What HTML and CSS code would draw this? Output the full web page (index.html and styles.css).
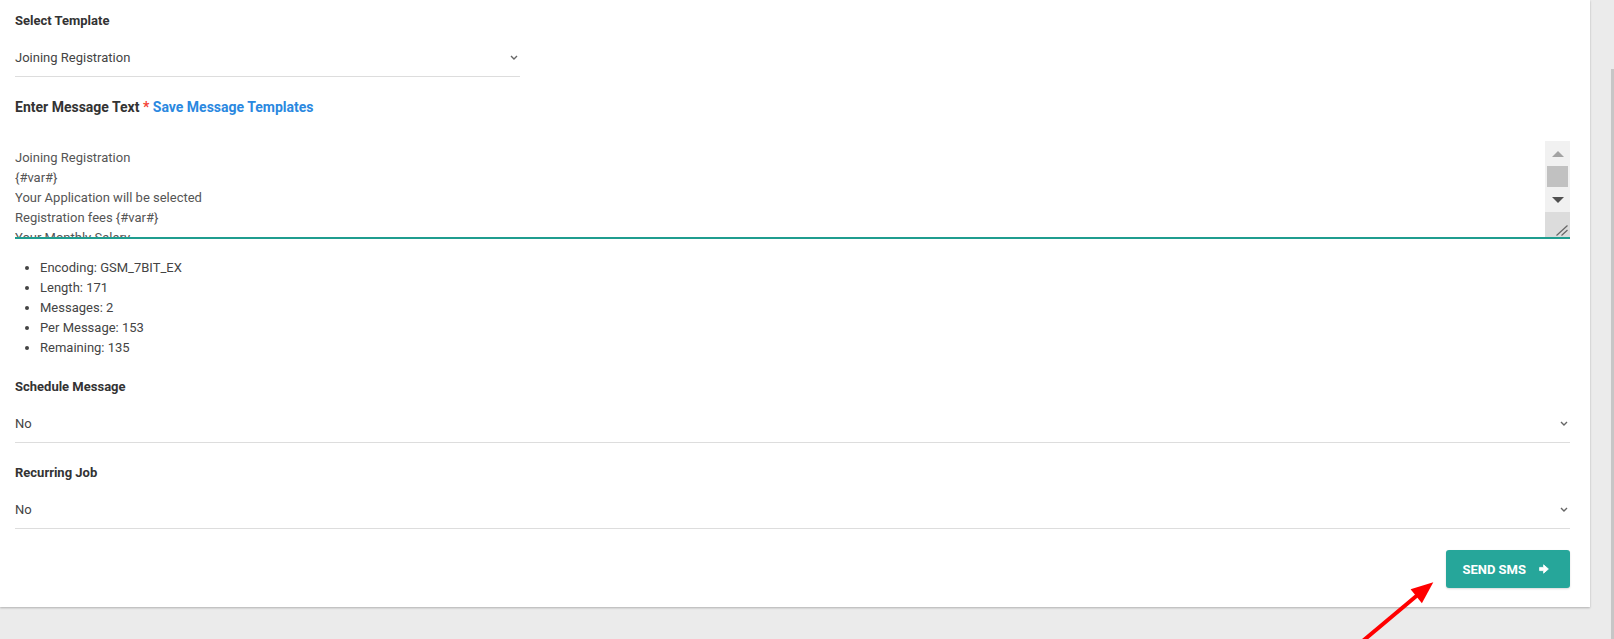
FILE: index.html
```html
<!DOCTYPE html>
<html lang="en">
<head>
  <meta charset="UTF-8" />
  <meta name="viewport" content="width=device-width, initial-scale=1.0"/>
  <title>Send SMS</title>
  <link rel="stylesheet" href="styles.css">
</head>
<body>
  <div class="page">
    <div class="card">
      <div class="field first">
        <div class="label">Select Template</div>
        <div class="select narrow">
          <span>Joining Registration</span>
          <svg class="chev" width="8" height="5" viewBox="0 0 8 5"><path d="M1 1l3 3 3-3" fill="none" stroke="#666" stroke-width="1.4"/></svg>
        </div>
      </div>

      <div class="field">
        <div class="label big">Enter Message Text <span class="req">*</span> <a class="link" href="#">Save Message Templates</a></div>
        <div class="msg-box">
          <textarea class="msg" autofocus spellcheck="false">Joining Registration
{#var#}
Your Application will be selected
Registration fees {#var#}
Your Monthly Salary
{#var#}
Thanks &amp; Regards
{#var#}</textarea>
          <div class="scrollbar">
            <div class="sb-btn"><span class="tri-up"></span></div>
            <div class="sb-track"><div class="sb-thumb"></div></div>
            <div class="sb-btn"><span class="tri-down"></span></div>
            <div class="sb-resizer">
              <svg width="25" height="25" viewBox="0 0 25 25"><path d="M11.5 23.5l11-10M16.5 23.5l6-5.5" stroke="#666" stroke-width="1.2" fill="none"/></svg>
            </div>
          </div>
        </div>
        <ul class="stats">
          <li>Encoding: GSM_7BIT_EX</li>
          <li>Length: 171</li>
          <li>Messages: 2</li>
          <li>Per Message: 153</li>
          <li>Remaining: 135</li>
        </ul>
      </div>

      <div class="field after-list">
        <div class="label">Schedule Message</div>
        <div class="select">
          <span>No</span>
          <svg class="chev" width="8" height="5" viewBox="0 0 8 5"><path d="M1 1l3 3 3-3" fill="none" stroke="#666" stroke-width="1.4"/></svg>
        </div>
      </div>

      <div class="field">
        <div class="label">Recurring Job</div>
        <div class="select">
          <span>No</span>
          <svg class="chev" width="8" height="5" viewBox="0 0 8 5"><path d="M1 1l3 3 3-3" fill="none" stroke="#666" stroke-width="1.4"/></svg>
        </div>
      </div>

      <div class="actions">
        <button class="btn">Send SMS
          <svg width="10" height="10" viewBox="0 0 10 10"><path fill="#fff" stroke="#fff" stroke-width="0.8" stroke-linejoin="round" d="M0.6 3.4H4.6V0.8L9.4 5 4.6 9.2V6.6H0.6Z"/></svg>
        </button>
      </div>
    </div>

    <div class="gutter"><div class="gutter-bar"></div></div>

    <svg class="pointer" width="100" height="69" viewBox="0 0 100 69">
      <line x1="8" y1="75" x2="67" y2="25.5" stroke="#f00" stroke-width="4"/>
      <polygon points="83.3,12.3 71.9,33.2 60.6,19.2" fill="#f00"/>
    </svg>
  </div>
</body>
</html>
```

FILE: styles.css
```css
body {
  margin: 0;
  background: #ebebeb;
  font-family: Roboto, "Noto Sans", Arial, sans-serif;
  color: #444;
}
.page {
  position: relative;
  display: flex;
  height: 100vh;
  overflow: hidden;
}
.card {
  width: 1590px;
  box-sizing: border-box;
  align-self: flex-start;
  padding: 11px 20px 19px 15px;
  background: #fff;
  box-shadow: 0 1px 2px rgba(0,0,0,0.25);
}
.field {
  margin-top: 20px;
}
.field.first {
  margin-top: 0;
}
.field.after-list {
  margin-top: 19px;
}
.label {
  font-size: 13px;
  font-weight: 700;
  line-height: 20px;
  color: #333;
}
.label.big {
  font-size: 14px;
}
.req {
  color: #f44336;
}
.link {
  color: #2a88e0;
  text-decoration: none;
}
.select {
  display: flex;
  align-items: center;
  justify-content: space-between;
  height: 37px;
  margin-top: 8px;
  border-bottom: 1px solid #ddd;
  font-size: 13px;
  color: #444;
}
.select.narrow {
  width: 505px;
}
.chev {
  margin-right: 2px;
}
.msg-box {
  display: flex;
  height: 96px;
  margin-top: 24px;
  border-bottom: 1px solid #1f9d8f;
  box-shadow: 0 1px 0 0 #1f9d8f;
}
.msg {
  flex: 1;
  margin: 0;
  padding: 7px 0 0;
  border: none;
  outline: none;
  resize: none;
  overflow: hidden;
  font-family: inherit;
  font-size: 13px;
  line-height: 20px;
  color: #555;
  caret-color: #222;
  background: transparent;
}
.scrollbar {
  width: 25px;
  display: flex;
  flex-direction: column;
  background: #f1f1f1;
}
.sb-btn {
  height: 25px;
  display: flex;
  align-items: center;
  justify-content: center;
}
.tri-up {
  width: 0;
  height: 0;
  border-left: 6px solid transparent;
  border-right: 6px solid transparent;
  border-bottom: 6px solid #a3a3a3;
}
.tri-down {
  width: 0;
  height: 0;
  border-left: 6px solid transparent;
  border-right: 6px solid transparent;
  border-top: 6px solid #505050;
}
.sb-track {
  height: 21px;
  padding: 0 2px;
}
.sb-thumb {
  height: 100%;
  background: #c1c1c1;
}
.sb-resizer {
  height: 25px;
  background: #dcdcdc;
}
.sb-resizer svg {
  display: block;
}
.stats {
  margin: 20px 0 0;
  padding-left: 25px;
  font-size: 13px;
  line-height: 20px;
  color: #444;
}
.actions {
  display: flex;
  justify-content: flex-end;
  margin-top: 21px;
}
.btn {
  display: flex;
  align-items: center;
  gap: 13px;
  height: 38px;
  padding: 0 21px 0 16px;
  border: none;
  border-radius: 3px;
  background: #26a69a;
  color: #fff;
  font-family: inherit;
  font-size: 13px;
  font-weight: 700;
  text-transform: uppercase;
  box-shadow: 0 1px 2px rgba(0,0,0,0.15);
}
.gutter {
  flex: 1;
  display: flex;
  justify-content: flex-end;
}
.gutter-bar {
  width: 3px;
  margin-top: 69px;
  background: #c6c6c6;
}
.pointer {
  position: absolute;
  left: 1350px;
  top: 570px;
}
```
